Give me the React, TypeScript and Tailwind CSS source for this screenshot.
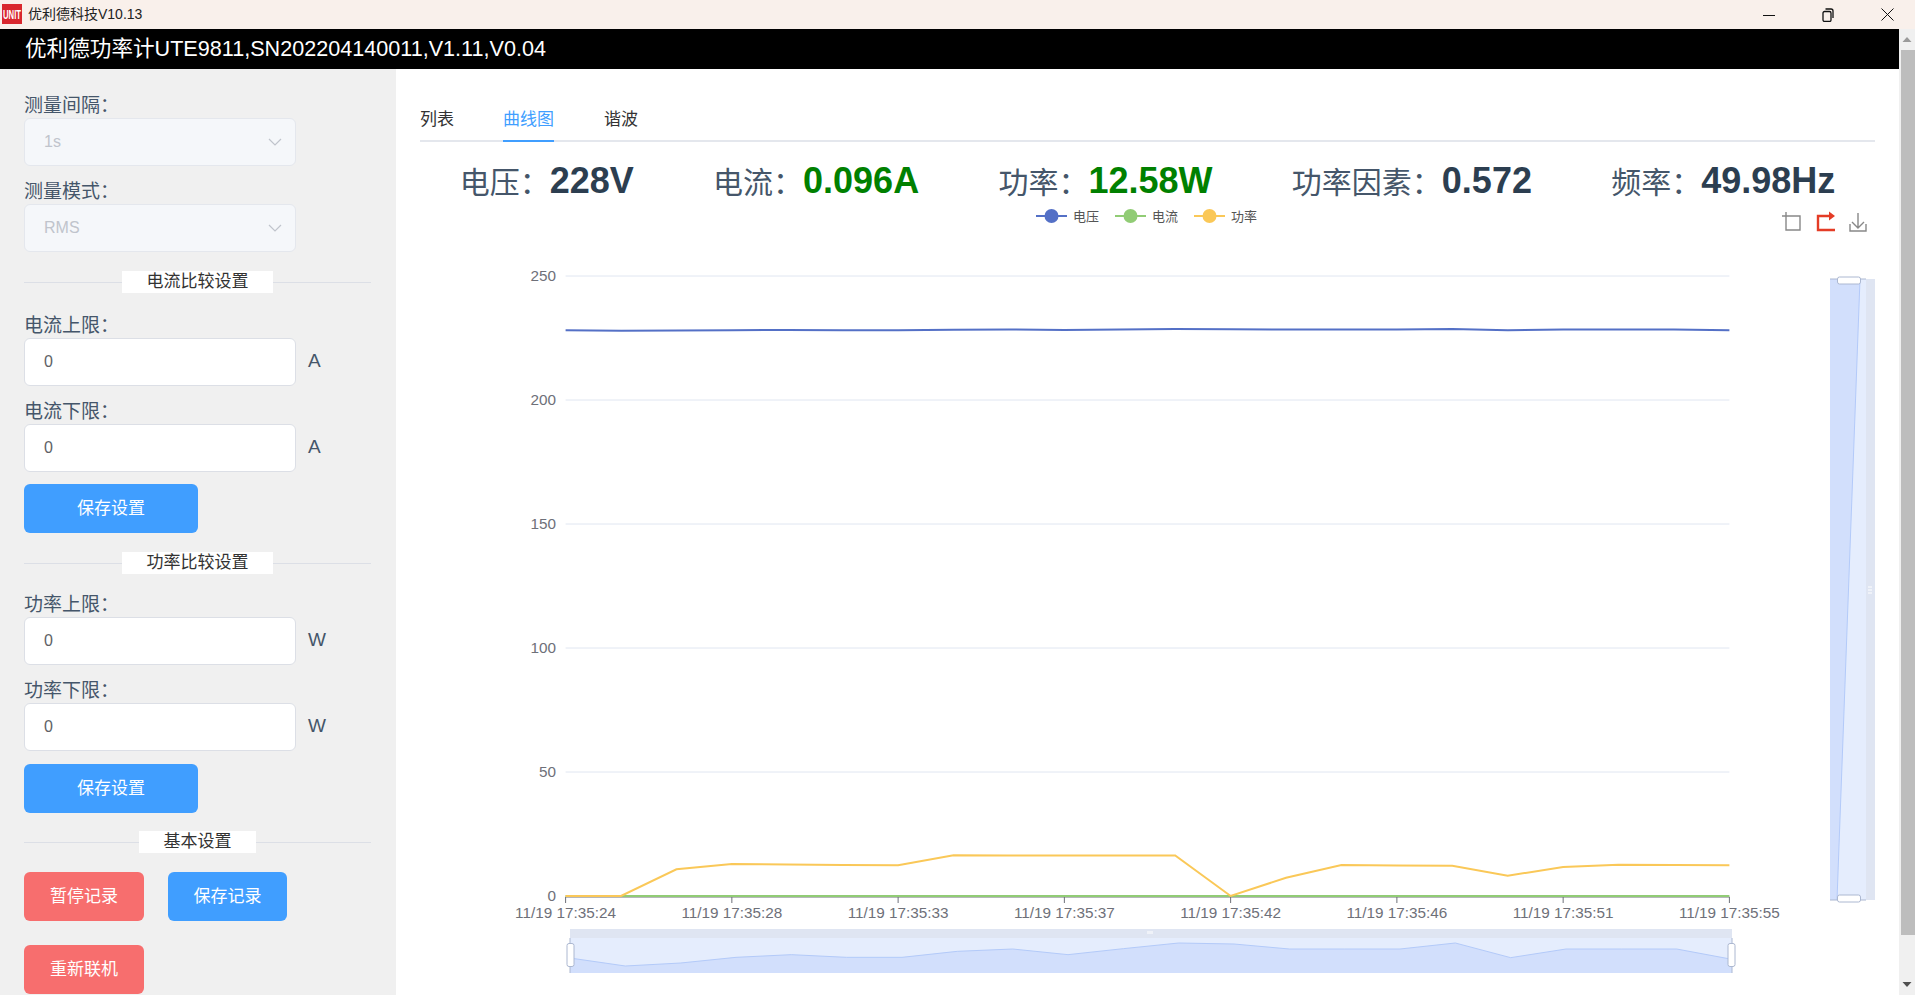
const FONT = '"Liberation Sans", "Noto Sans CJK SC", sans-serif'

// chart data, x step is one sample
const yellow = [894, 894, 867.3, 862, 862.6, 863, 863.3, 853.3, 853.4, 853.6, 853.5, 853.4, 894, 875.7, 863, 863.4, 863.7, 873.7, 865, 862.7, 863, 863.3]
const mini = [348, 372, 363, 346, 338, 346, 346, 328, 321, 338, 320, 303, 306, 321, 321, 321, 303, 347, 321, 321, 321, 352]
const xTicks = ["17:35:24", "17:35:28", "17:35:33", "17:35:37", "17:35:42", "17:35:46", "17:35:51", "17:35:55"]
const yTicks = [250, 200, 150, 100, 50, 0]

const plotX = (i: number) => 565.6 + (i * (1729.4 - 565.6)) / 21
const miniX = (i: number) => 570 + (i * (1732 - 570)) / 21
const blueLine = mini.map((m, i) => `${plotX(i)},${328 + (m - 340) * 0.025}`).join(" ")
const yellowLine = yellow.map((y, i) => `${plotX(i)},${y}`).join(" ")
const miniLine = mini.map((m, i) => `${miniX(i)},${840 + m / 3}`).join(" ")

function Label({ text, className }: { text: string; className: string }) {
  return <div className={`h-6 text-[19px] leading-6 text-[#45566a] ${className}`}>{text}</div>
}

function Select({ value }: { value: string }) {
  return (
    <div className="flex h-12 w-[272px] items-center justify-between rounded-md border border-[#e4e7ed] bg-[#f5f7fa] pl-[19px] pr-[13px] text-base text-[#c0c4cc]">
      <span>{value}</span>
      <svg width="14" height="8" viewBox="0 0 14 8" fill="none" stroke="#c0c4cc" strokeWidth="1.2">
        <path d="M1 1l6 6 6-6" />
      </svg>
    </div>
  )
}

function Input({ unit }: { unit: string }) {
  return (
    <div className="flex items-center">
      <div className="flex h-12 w-[272px] items-center rounded-md border border-[#dcdfe6] bg-white pl-[19px] text-base text-[#606266]">0</div>
      <span className="ml-3 -translate-y-px text-[19px] text-[#45566a]">{unit}</span>
    </div>
  )
}

function Divider({ text, className, labelWidth }: { text: string; className: string; labelWidth: string }) {
  return (
    <div className={`flex h-[22px] w-[347px] items-center ${className}`}>
      <div className="h-px flex-1 bg-[#dcdfe6]" />
      <div className={`h-[22px] bg-white text-center text-[17px] leading-[22px] text-[#333] ${labelWidth}`}>{text}</div>
      <div className="h-px flex-1 bg-[#dcdfe6]" />
    </div>
  )
}

function Button({ text, className }: { text: string; className: string }) {
  return (
    <div className={`flex h-[49px] items-center justify-center rounded-md text-[17px] text-white ${className}`}>{text}</div>
  )
}

function Stat({ label, value, green }: { label: string; value: string; green?: boolean }) {
  return (
    <div className="flex items-baseline leading-10 whitespace-nowrap">
      <span className="text-[30px] text-[#45566a]">{label}：</span>
      <span className={`text-4xl font-bold ${green ? "text-[#008000]" : "text-[#2c3e50]"}`}>{value}</span>
    </div>
  )
}

function Chart() {
  return (
    <svg width="1455" height="794" viewBox="420 201 1455 794" className="block" fontFamily={FONT}>
      {/* legend */}
      {[
        { x: 1036, color: "#5470c6", name: "电压" },
        { x: 1115, color: "#91cc75", name: "电流" },
        { x: 1194, color: "#fac858", name: "功率" },
      ].map((l) => (
        <g key={l.name}>
          <line x1={l.x} x2={l.x + 31} y1="214" y2="214" stroke={l.color} strokeWidth="2" />
          <circle cx={l.x + 15.5} cy="214" r="7" fill={l.color} />
          <text x={l.x + 37} y="218.5" fontSize="13" fill="#555">{l.name}</text>
        </g>
      ))}

      {/* toolbox */}
      <g fill="none" stroke="#888" strokeWidth="1.4">
        <path d="M1786 210v18h14v-14h-18" />
        <path d="M1858 211v15M1852 220l6 6 6-6M1850 222v7h16v-7" />
      </g>
      <path d="M1829 214h-11v14h17M1829 214h2" fill="none" stroke="#e43c26" strokeWidth="2.4" />
      <path d="M1829 209.500l6 4.500-6 4.500z" fill="#e43c26" />

      {/* grid and axes */}
      {yTicks.map((t, i) => (
        <g key={t}>
          {t > 0 && <line x1="565.600" x2="1729.400" y1={274 + i * 124} y2={274 + i * 124} stroke="#e0e6f1" />}
          <text x="556" y={279 + i * 124} textAnchor="end" fontSize="15.3" fill="#6e7079">{t}</text>
        </g>
      ))}
      <line x1="565.600" x2="1729.400" y1="895" y2="895" stroke="#6e7079" />
      {xTicks.map((t, i) => {
        const x = 565.6 + (i * (1729.4 - 565.6)) / 7
        return (
          <g key={t}>
            <line x1={x} x2={x} y1="895" y2="901" stroke="#6e7079" />
            <text x={x} y="916" textAnchor="middle" fontSize="15.3" fill="#6e7079">11/19 {t}</text>
          </g>
        )
      })}

      {/* series */}
      <polyline points={blueLine} fill="none" stroke="#5470c6" strokeWidth="2" />
      <line x1="565.600" x2="1729.400" y1="894" y2="894" stroke="#91cc75" strokeWidth="2" />
      <polyline points={yellowLine} fill="none" stroke="#fac858" strokeWidth="2" />

      {/* bottom slider */}
      <rect x="570" y="927" width="1162" height="44" fill="#e5edfd" />
      <rect x="570" y="927" width="1162" height="9" fill="#dfe5f2" />
      <polygon points={`570,971 ${miniLine} 1732,971`} fill="#d2dffc" />
      <polyline points={miniLine} fill="none" stroke="#b3caf9" />
      <line x1="570" x2="570" y1="936" y2="971" stroke="#acb8d1" />
      <line x1="1732" x2="1732" y1="936" y2="971" stroke="#acb8d1" />
      <rect x="567" y="941.500" width="7" height="23" rx="2" fill="#fff" stroke="#acb8d1" />
      <rect x="1728" y="941.500" width="7" height="23" rx="2" fill="#fff" stroke="#acb8d1" />
      <path d="M1148 929v3M1150 929v3M1152 929v3" stroke="#fff" />

      {/* right slider */}
      <rect x="1830" y="277" width="45" height="621" fill="#dfe5f2" />
      <rect x="1830" y="277" width="36" height="621" fill="#e5edfd" />
      <polygon points="1830,277 1860,277 1837,898 1830,898" fill="#d2dffc" />
      <line x1="1860" y1="277" x2="1837" y2="898" stroke="#b3caf9" />
      <path d="M1830 277h36M1830 898h36" stroke="#acb8d1" />
      <rect x="1837.500" y="275" width="23" height="7" rx="2" fill="#fff" stroke="#acb8d1" />
      <rect x="1837.500" y="893" width="23" height="7" rx="2" fill="#fff" stroke="#acb8d1" />
      <path d="M1868 585h4M1868 588h4M1868 591h4" stroke="#fff" />
    </svg>
  )
}

export default function App() {
  return (
    <div className="flex h-[995px] w-[1915px] flex-col overflow-hidden bg-white" style={{ fontFamily: FONT }}>
      {/* window title bar */}
      <div className="flex h-[29px] shrink-0 items-center bg-[#f9f0eb] pl-0.5 text-[14px] text-[#222]">
        <svg width="20" height="20" viewBox="0 0 20 20" className="mr-1.5 -translate-y-px">
          <rect width="20" height="20" fill="#d9272e" />
          <text x="1" y="15" fontSize="13" fontWeight="700" fill="#fff" textLength="18" lengthAdjust="spacingAndGlyphs" fontFamily={FONT}>UNIT</text>
        </svg>
        <span>优利德科技V10.13</span>
        <div className="ml-auto flex items-center gap-[47px] pr-[21px]">
          <svg width="12" height="12" viewBox="0 0 12 12" stroke="#111" fill="none"><path d="M0 6.500h12" /></svg>
          <svg width="12" height="14" viewBox="0 0 12 14" stroke="#111" fill="none" strokeWidth="1.300"><rect x="1" y="3.500" width="8" height="10" rx="1.500" /><path d="M3.500 1h5.500a2 2 0 012 2v7" /></svg>
          <svg width="13" height="13" viewBox="0 0 13 13" stroke="#111" fill="none"><path d="M.5.500l12 12M12.500.500l-12 12" /></svg>
        </div>
      </div>

      <div className="flex min-h-0 flex-1">
        <div className="flex min-w-0 flex-1 flex-col">
          {/* header */}
          <div className="flex h-10 shrink-0 items-center bg-black pl-[25px] text-[21.6px] text-white">
            优利德功率计UTE9811,SN202204140011,V1.11,V0.04
          </div>

          <div className="flex min-h-0 flex-1">
            {/* settings */}
            <div className="w-[396px] shrink-0 bg-[#f0f0f0] pl-6">
              <Label text="测量间隔：" className="mt-[25px]" />
              <Select value="1s" />
              <Label text="测量模式：" className="mt-3.5" />
              <Select value="RMS" />

              <Divider text="电流比较设置" className="mt-[19px]" labelWidth="w-[151px]" />
              <Label text="电流上限：" className="mt-[21px]" />
              <Input unit="A" />
              <Label text="电流下限：" className="mt-3.5" />
              <Input unit="A" />
              <Button text="保存设置" className="mt-3 w-[174px] bg-[#409eff]" />

              <Divider text="功率比较设置" className="mt-[19px]" labelWidth="w-[151px]" />
              <Label text="功率上限：" className="mt-[19px]" />
              <Input unit="W" />
              <Label text="功率下限：" className="mt-3.5" />
              <Input unit="W" />
              <Button text="保存设置" className="mt-[13px] w-[174px] bg-[#409eff]" />

              <Divider text="基本设置" className="mt-[18px]" labelWidth="w-[117px]" />
              <div className="mt-[19px] flex gap-6">
                <Button text="暂停记录" className="w-[120px] bg-[#f76e6e]" />
                <Button text="保存记录" className="w-[119px] bg-[#409eff]" />
              </div>
              <Button text="重新联机" className="mt-6 w-[120px] bg-[#f76e6e]" />
            </div>

            {/* main panel */}
            <div className="min-w-0 flex-1 px-6">
              <div className="flex h-[73px] items-end border-b-2 border-[#e4e7ed] text-[17px] text-[#333]">
                <div className="flex h-10 w-[83px] items-center">列表</div>
                <div className="-mb-0.5 flex h-[42px] w-[51px] items-center justify-center border-b-2 border-[#409eff] text-[#409eff]">曲线图</div>
                <div className="ml-[50px] flex h-10 items-center">谐波</div>
              </div>
              <div className="flex justify-around pt-[19px]">
                <Stat label="电压" value="228V" />
                <Stat label="电流" value="0.096A" green />
                <Stat label="功率" value="12.58W" green />
                <Stat label="功率因素" value="0.572" />
                <Stat label="频率" value="49.98Hz" />
              </div>
              <Chart />
            </div>
          </div>
        </div>

        {/* scrollbar */}
        <div className="flex w-4 shrink-0 flex-col items-center bg-[#f0f0f0]">
          <svg width="10" height="21" viewBox="0 0 10 21" className="shrink-0"><path d="M5 8l4.500 5h-9z" fill="#9a9a9a" /></svg>
          <div className="ml-0.5 h-[885px] w-3.5 shrink-0 bg-[#bdbdbd]" />
          <svg width="10" height="60" viewBox="0 0 10 60" className="shrink-0"><path d="M.5 47h9L5 52z" fill="#505050" /></svg>
        </div>
      </div>
    </div>
  )
}
